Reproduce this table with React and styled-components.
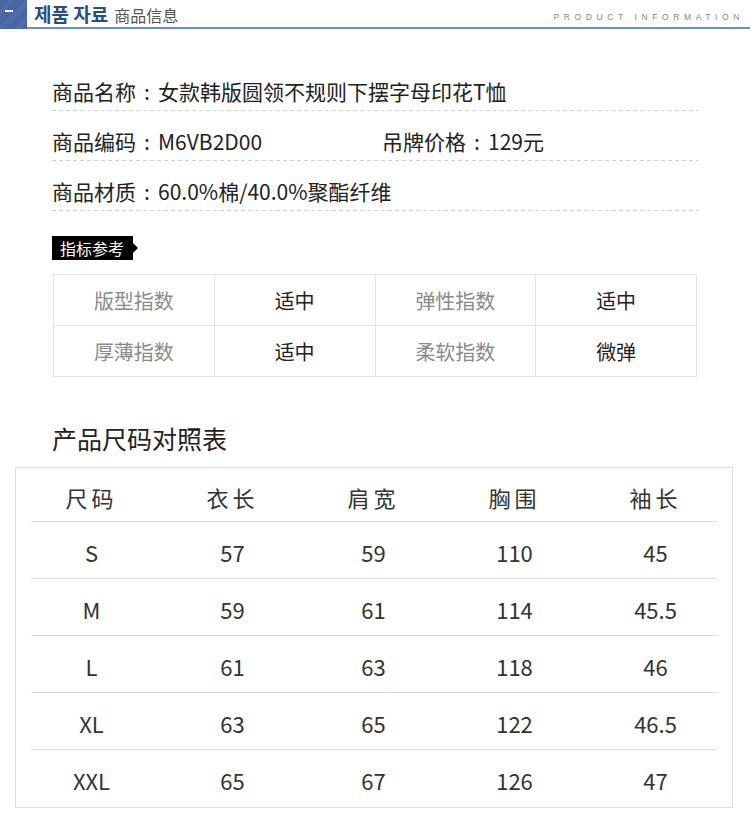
import styled, { createGlobalStyle } from "styled-components";

const GlobalStyle = createGlobalStyle`
    body {
        margin: 0;
        background: #ffffff;
        font-family: "Noto Sans CJK SC", "Noto Sans", sans-serif;
        color: #222;
    }
`

const Page = styled.div`
    width: 750px;
    height: 823px;
    overflow: hidden;
    background: #fff;
`

const Header = styled.div`
    display: flex;
    height: 29px;
`

const Square = styled.div`
    width: 27px;
    height: 29px;
    background: repeating-linear-gradient(135deg, #3f5f9f 0 1px, #5573b0 1px 2px);
    display: flex;
    align-items: flex-start;
    padding: 10px 0 0 5px;
    box-sizing: border-box;
    &::before {
        content: "";
        width: 8px;
        height: 2px;
        background: #fff;
    }
`

const HeaderBar = styled.div`
    flex: 1;
    display: flex;
    align-items: center;
    justify-content: space-between;
    border-bottom: 2px solid #6d8ec6;
    padding: 0 6px 0 7px;
`

const HeaderTitle = styled.div`
    display: flex;
    align-items: baseline;
    gap: 6px;
`

const KrTitle = styled.span`
    font-family: "Noto Sans CJK KR", sans-serif;
    font-weight: 700;
    font-size: 19px;
    color: #2b4c8c;
`

const CnTitle = styled.span`
    font-size: 16px;
    color: #555;
`

const EnTitle = styled.span`
    font-family: "Liberation Sans", sans-serif;
    font-size: 8.5px;
    letter-spacing: 4.6px;
    color: #888;
    margin-top: 6px;
`

const Info = styled.div`
    margin: 33px 0 0 52px;
    width: 646px;
`

const InfoRow = styled.div`
    display: flex;
    height: 49px;
    padding-top: 14px;
    box-sizing: border-box;
    line-height: 30px;
    font-size: 21px;
    color: #222;
    background-image: repeating-linear-gradient(90deg, #cfcfcf 0 4px, transparent 4px 7px);
    background-size: 100% 1px;
    background-repeat: no-repeat;
    background-position: bottom;
    margin-bottom: 1px;
`

const InfoCell = styled.span`
    width: ${p => p.$w || "auto"};
`

const Colon = styled.span`
    display: inline-block;
    width: 1.05em;
    text-align: center;
`

const Tag = styled.div`
    position: relative;
    display: inline-block;
    margin: 24px 0 0 52px;
    background: #000;
    color: #fff;
    font-size: 16px;
    height: 24px;
    line-height: 24px;
    padding: 0 9px 0 8px;
    &::after {
        content: "";
        position: absolute;
        right: -5px;
        top: 7px;
        border-left: 5px solid #000;
        border-top: 5px solid transparent;
        border-bottom: 5px solid transparent;
    }
`

const IndexTable = styled.table`
    margin: 14px 0 0 53px;
    width: 644px;
    border-collapse: collapse;
    td {
        border: 1px solid #e3e3e3;
        height: 50px;
        width: 25%;
        text-align: center;
        font-size: 20px;
        padding: 0;
    }
`

const Label = styled.td`
    color: #8a8a8a;
`

const Value = styled.td`
    color: #222;
`

const SizeTitle = styled.div`
    margin: 46px 0 0 52px;
    font-size: 25px;
    line-height: 30px;
    color: #222;
`

const SizeBox = styled.div`
    margin: 14px 0 0 15px;
    width: 718px;
    border: 1px solid #dedede;
    box-sizing: border-box;
`

const SizeRow = styled.div`
    display: grid;
    grid-template-columns: repeat(5, 141px);
    padding: ${p => p.$head ? "5px" : "3px"} 0 0 5px;
    height: ${p => p.$last ? "57px" : p.$head ? "53px" : "56px"};
    box-sizing: border-box;
    align-items: center;
    font-size: 22px;
    color: #333;
    letter-spacing: ${p => p.$head ? "4px" : "0"};
    span {
        text-align: center;
    }
`

const Divider = styled.div`
    height: 1px;
    margin: 0 15px;
    background: #dcdcdc;
`

const indexRows = [
    ["版型指数", "适中", "弹性指数", "适中"],
    ["厚薄指数", "适中", "柔软指数", "微弹"],
]

const sizeRows = [
    ["S", "57", "59", "110", "45"],
    ["M", "59", "61", "114", "45.5"],
    ["L", "61", "63", "118", "46"],
    ["XL", "63", "65", "122", "46.5"],
    ["XXL", "65", "67", "126", "47"],
]

const App = () => {
    return (
        <Page>
            <GlobalStyle />
            <Header>
                <Square />
                <HeaderBar>
                    <HeaderTitle>
                        <KrTitle>제품 자료</KrTitle>
                        <CnTitle>商品信息</CnTitle>
                    </HeaderTitle>
                    <EnTitle>PRODUCT INFORMATION</EnTitle>
                </HeaderBar>
            </Header>

            <Info>
                <InfoRow>商品名称<Colon>:</Colon>女款韩版圆领不规则下摆字母印花T恤</InfoRow>
                <InfoRow>
                    <InfoCell $w="330px">商品编码<Colon>:</Colon>M6VB2D00</InfoCell>
                    <InfoCell>吊牌价格<Colon>:</Colon>129元</InfoCell>
                </InfoRow>
                <InfoRow>商品材质<Colon>:</Colon>60.0%棉/40.0%聚酯纤维</InfoRow>
            </Info>

            <Tag>指标参考</Tag>

            <IndexTable>
                <tbody>
                    {indexRows.map((r, i) => (
                        <tr key={i}>
                            <Label>{r[0]}</Label>
                            <Value>{r[1]}</Value>
                            <Label>{r[2]}</Label>
                            <Value>{r[3]}</Value>
                        </tr>
                    ))}
                </tbody>
            </IndexTable>

            <SizeTitle>产品尺码对照表</SizeTitle>

            <SizeBox>
                <SizeRow $head>
                    {["尺码", "衣长", "肩宽", "胸围", "袖长"].map(h => <span key={h}>{h}</span>)}
                </SizeRow>
                {sizeRows.map((r, i) => (
                    <div key={r[0]}>
                        <Divider />
                        <SizeRow $last={i === sizeRows.length - 1}>
                            {r.map((c, j) => <span key={j}>{c}</span>)}
                        </SizeRow>
                    </div>
                ))}
            </SizeBox>
        </Page>
    )
}

export default App
